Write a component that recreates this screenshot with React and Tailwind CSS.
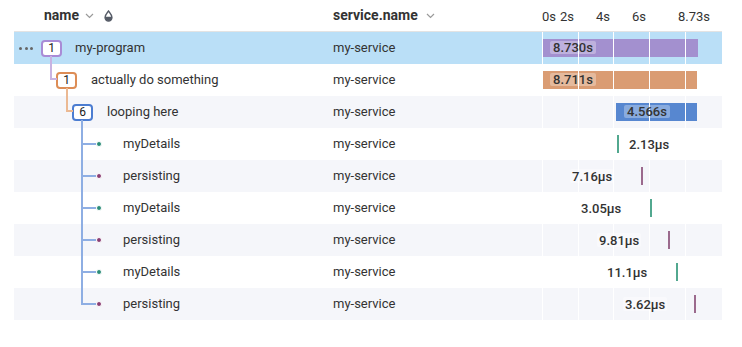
import React from "react";

const FONT = { fontFamily: "Roboto, 'Noto Sans', sans-serif" };

function Chevron({ className }) {
  return (
    <svg width="9" height="6" viewBox="0 0 9 6" className={className}>
      <path d="M1 1 L4.5 4.5 L8 1" fill="none" stroke="#9a9a9a" strokeWidth="1.2" />
    </svg>
  );
}

function Drop() {
  return (
    <svg width="9" height="12" viewBox="0 0 9 12">
      <defs>
        <clipPath id="half">
          <rect x="0" y="6.8" width="9" height="6" />
        </clipPath>
      </defs>
      <path d="M4.5 1 C3 3 1 5 1 7.6 A3.5 3.5 0 0 0 8 7.6 C8 5 6 3 4.5 1 Z" fill="none" stroke="#555b66" strokeWidth="1.3" />
      <path d="M4.5 1 C3 3 1 5 1 7.6 A3.5 3.5 0 0 0 8 7.6 C8 5 6 3 4.5 1 Z" fill="#555b66" clipPath="url(#half)" />
    </svg>
  );
}

const GRID = [0, 36, 71, 107, 143];

function GridLines() {
  return (
    <>
      {GRID.map((x) => (
        <div key={x} className="absolute top-0 bottom-0 w-px bg-white" style={{ left: x }} />
      ))}
    </>
  );
}

const rows = [
  { kind: 0, name: "my-program", bg: "bg-[#badff7]", bar: { left: 0, width: 156, color: "bg-[#a390cf]", label: "8.730s" } },
  { kind: 1, name: "actually do something", bg: "bg-white", bar: { left: 0, width: 155, color: "bg-[#da9c73]", label: "8.711s" } },
  { kind: 2, name: "looping here", bg: "bg-[#f5f6fa]", bar: { left: 74, width: 81, color: "bg-[#5787d0]", label: "4.566s" } },
  { kind: 3, name: "myDetails", bg: "bg-white", teal: true, line: 75, label: "2.13µs", labelLeft: 87 },
  { kind: 3, name: "persisting", bg: "bg-[#f5f6fa]", teal: false, line: 99, label: "7.16µs", labelLeft: 30 },
  { kind: 3, name: "myDetails", bg: "bg-white", teal: true, line: 108, label: "3.05µs", labelLeft: 39 },
  { kind: 3, name: "persisting", bg: "bg-[#f5f6fa]", teal: false, line: 126, label: "9.81µs", labelLeft: 57 },
  { kind: 3, name: "myDetails", bg: "bg-white", teal: true, line: 134, label: "11.1µs", labelLeft: 65 },
  { kind: 3, name: "persisting", bg: "bg-[#f5f6fa]", teal: false, line: 152, label: "3.62µs", labelLeft: 83, last: true },
];

function Badge({ n, border }) {
  return (
    <div className={`w-[21px] h-[17px] shrink-0 rounded-[4px] border-2 ${border} bg-white flex items-center justify-center text-[12px] leading-none text-[#222]`}>
      {n}
    </div>
  );
}

function NameCell({ r }) {
  if (r.kind === 0) {
    return (
      <div className="relative w-[319px] h-8 flex items-center">
        <div className="absolute left-[5px] top-[15px] flex gap-[2.5px]">
          <div className="w-[3px] h-[3px] rounded-full bg-[#666]" />
          <div className="w-[3px] h-[3px] rounded-full bg-[#666]" />
          <div className="w-[3px] h-[3px] rounded-full bg-[#666]" />
        </div>
        <div className="absolute left-[36px] top-[24px] w-[2px] h-[8px] bg-[#c8b3e2]" />
        <div className="w-[27px] shrink-0" />
        <Badge n="1" border="border-[#a98bd6]" />
        <span className="ml-[13px] text-[13px] text-[#333]">{r.name}</span>
      </div>
    );
  }
  if (r.kind === 1) {
    return (
      <div className="relative w-[319px] h-8 flex items-center">
        <div className="absolute left-[36px] top-0 w-[2px] h-[16px] bg-[#c8b3e2]" />
        <div className="absolute left-[36px] top-[14px] w-[7px] h-[2px] bg-[#c8b3e2]" />
        <div className="absolute left-[52px] top-[24px] w-[2px] h-[8px] bg-[#ebb993]" />
        <div className="w-[42px] shrink-0" />
        <Badge n="1" border="border-[#dd8d56]" />
        <span className="ml-[14px] text-[13px] text-[#333]">{r.name}</span>
      </div>
    );
  }
  if (r.kind === 2) {
    return (
      <div className="relative w-[319px] h-8 flex items-center">
        <div className="absolute left-[52px] top-0 w-[2px] h-[16px] bg-[#ebb993]" />
        <div className="absolute left-[52px] top-[14px] w-[7px] h-[2px] bg-[#ebb993]" />
        <div className="absolute left-[67px] top-[24px] w-[2px] h-[8px] bg-[#8eaee3]" />
        <div className="w-[58px] shrink-0" />
        <Badge n="6" border="border-[#4c7dd1]" />
        <span className="ml-[14px] text-[13px] text-[#333]">{r.name}</span>
      </div>
    );
  }
  return (
    <div className="relative w-[319px] h-8 flex items-center">
      <div className={`absolute left-[67px] top-0 w-[2px] ${r.last ? "h-[17px]" : "h-8"} bg-[#8eaee3]`} />
      <div className="absolute left-[67px] top-[15px] w-[15px] h-[2px] bg-[#8eaee3]" />
      <div className={`absolute left-[82px] top-[13px] w-[6px] h-[6px] rounded-full border border-white ${r.teal ? "bg-[#2b8d78]" : "bg-[#8a3e73]"}`} />
      <div className="w-[109px] shrink-0" />
      <span className="text-[13px] text-[#333]">{r.name}</span>
    </div>
  );
}

function TimeCell({ r }) {
  return (
    <div className="relative w-[180px] h-8">
      {r.bar ? (
        <div className={`absolute top-[7px] h-[18px] ${r.bar.color}`} style={{ left: r.bar.left, width: r.bar.width }} />
      ) : (
        <div className={`absolute top-[7px] h-[18px] w-[2px] ${r.teal ? "bg-[#52a88f]" : "bg-[#9b6a8d]"}`} style={{ left: r.line }} />
      )}
      <GridLines />
      {r.bar ? (
        <div
          className="absolute top-[9px] h-[13px] px-[3px] rounded-[2px] bg-white/30 flex items-center text-[13px] font-medium leading-none text-[#333]"
          style={{ left: r.bar.left + 8 }}
        >
          {r.bar.label}
        </div>
      ) : (
        <div
          className="absolute top-[9px] h-[14px] px-[2px] rounded-[2px] bg-white/40 flex items-center text-[13px] font-medium leading-none text-[#333]"
          style={{ left: r.labelLeft - 2 }}
        >
          {r.label}
        </div>
      )}
    </div>
  );
}

export default function App() {
  return (
    <div className="w-[742px] h-[347px] bg-white px-[14px]" style={FONT}>
      <div className="w-[708px]">
        <div className="flex h-[32px] border-b border-[#e3e3e3]">
          <div className="w-[319px] flex items-center pl-[30px]">
            <span className="text-[14px] font-bold text-[#333]">name</span>
            <Chevron className="ml-[6px]" />
            <div className="ml-[10px] flex items-center">
              <Drop />
            </div>
          </div>
          <div className="w-[209px] flex items-center">
            <span className="text-[14px] font-bold text-[#333]">service.name</span>
            <Chevron className="ml-[8px]" />
          </div>
          <div className="relative w-[180px] text-[13px] text-[#333]">
            <span className="absolute top-[7px] left-[0px]">0s</span>
            <span className="absolute top-[7px] left-[18px]">2s</span>
            <span className="absolute top-[7px] left-[54px]">4s</span>
            <span className="absolute top-[7px] left-[90px]">6s</span>
            <span className="absolute top-[7px] left-[136px]">8.73s</span>
          </div>
        </div>
        {rows.map((r, i) => (
          <div key={i} className={`flex h-8 ${r.bg}`}>
            <NameCell r={r} />
            <div className="w-[209px] flex items-center text-[13px] text-[#333]">my-service</div>
            <TimeCell r={r} />
          </div>
        ))}
      </div>
    </div>
  );
}
